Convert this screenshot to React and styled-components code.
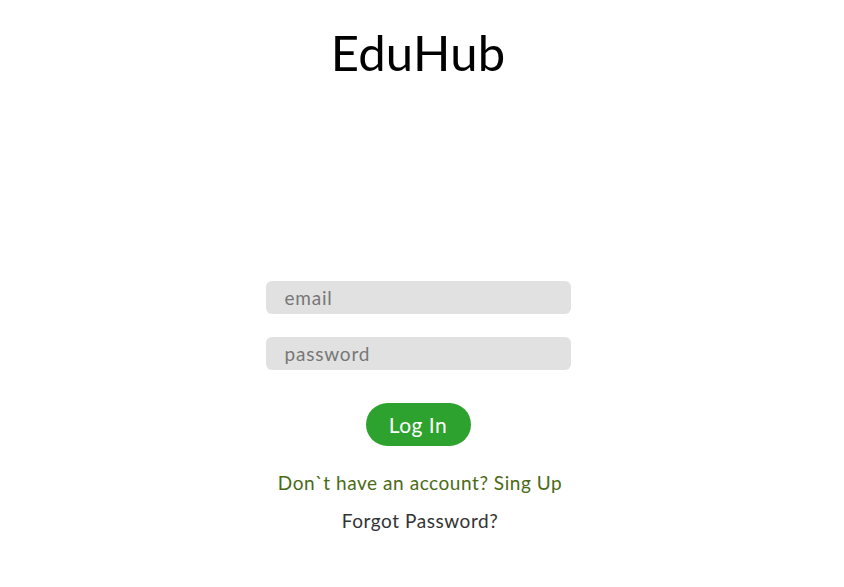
import React from "react";
import styled, { createGlobalStyle } from "styled-components";

const GlobalStyle = createGlobalStyle`
  body {
    margin: 0;
    background: #fff;
    font-family: Lato, "Open Sans", sans-serif;
  }
`;

const Page = styled.div`
  display: flex;
  flex-direction: column;
  align-items: center;
  width: 836px;
  min-height: 587px;
`;

const Title = styled.h1`
  margin: 23px 0 0;
  font-size: 49px;
  font-weight: 400;
  line-height: 58px;
  letter-spacing: 0.2px;
  color: #000;
`;

const Form = styled.form`
  display: flex;
  flex-direction: column;
  align-items: center;
  margin-top: 200px;
`;

const Input = styled.input`
  box-sizing: border-box;
  width: 305px;
  height: 33px;
  margin-bottom: 23px;
  padding: 0 19px;
  border: none;
  border-radius: 6px;
  background: #e1e1e1;
  font-family: inherit;
  font-size: 19px;
  letter-spacing: 0.8px;
  color: #333;
  outline: none;

  &::placeholder {
    color: #777;
  }
`;

const Button = styled.button`
  width: 105px;
  height: 43px;
  margin-top: 10px;
  border: none;
  border-radius: 22px;
  background: #2ea22e;
  color: #fff;
  font-family: inherit;
  font-size: 21px;
  letter-spacing: 0.5px;
  cursor: pointer;
`;

const LinkText = styled.a`
  margin-top: ${(p) => p.$top}px;
  margin-left: ${(p) => p.$shift || 0}px;
  font-size: 19px;
  line-height: 24px;
  letter-spacing: 0.55px;
  color: ${(p) => p.$color};
  text-decoration: none;
  cursor: pointer;
`;

export default function App() {
  return (
    <Page>
      <GlobalStyle />
      <Title>EduHub</Title>
      <Form onSubmit={(e) => e.preventDefault()}>
        <Input type="email" placeholder="email" />
        <Input type="password" placeholder="password" />
        <Button type="submit">Log In</Button>
        <LinkText $top={25} $shift={4} $color="#4a6a16">Don`t have an account? Sing Up</LinkText>
        <LinkText $top={14} $shift={4} $color="#333">Forgot Password?</LinkText>
      </Form>
    </Page>
  );
}
